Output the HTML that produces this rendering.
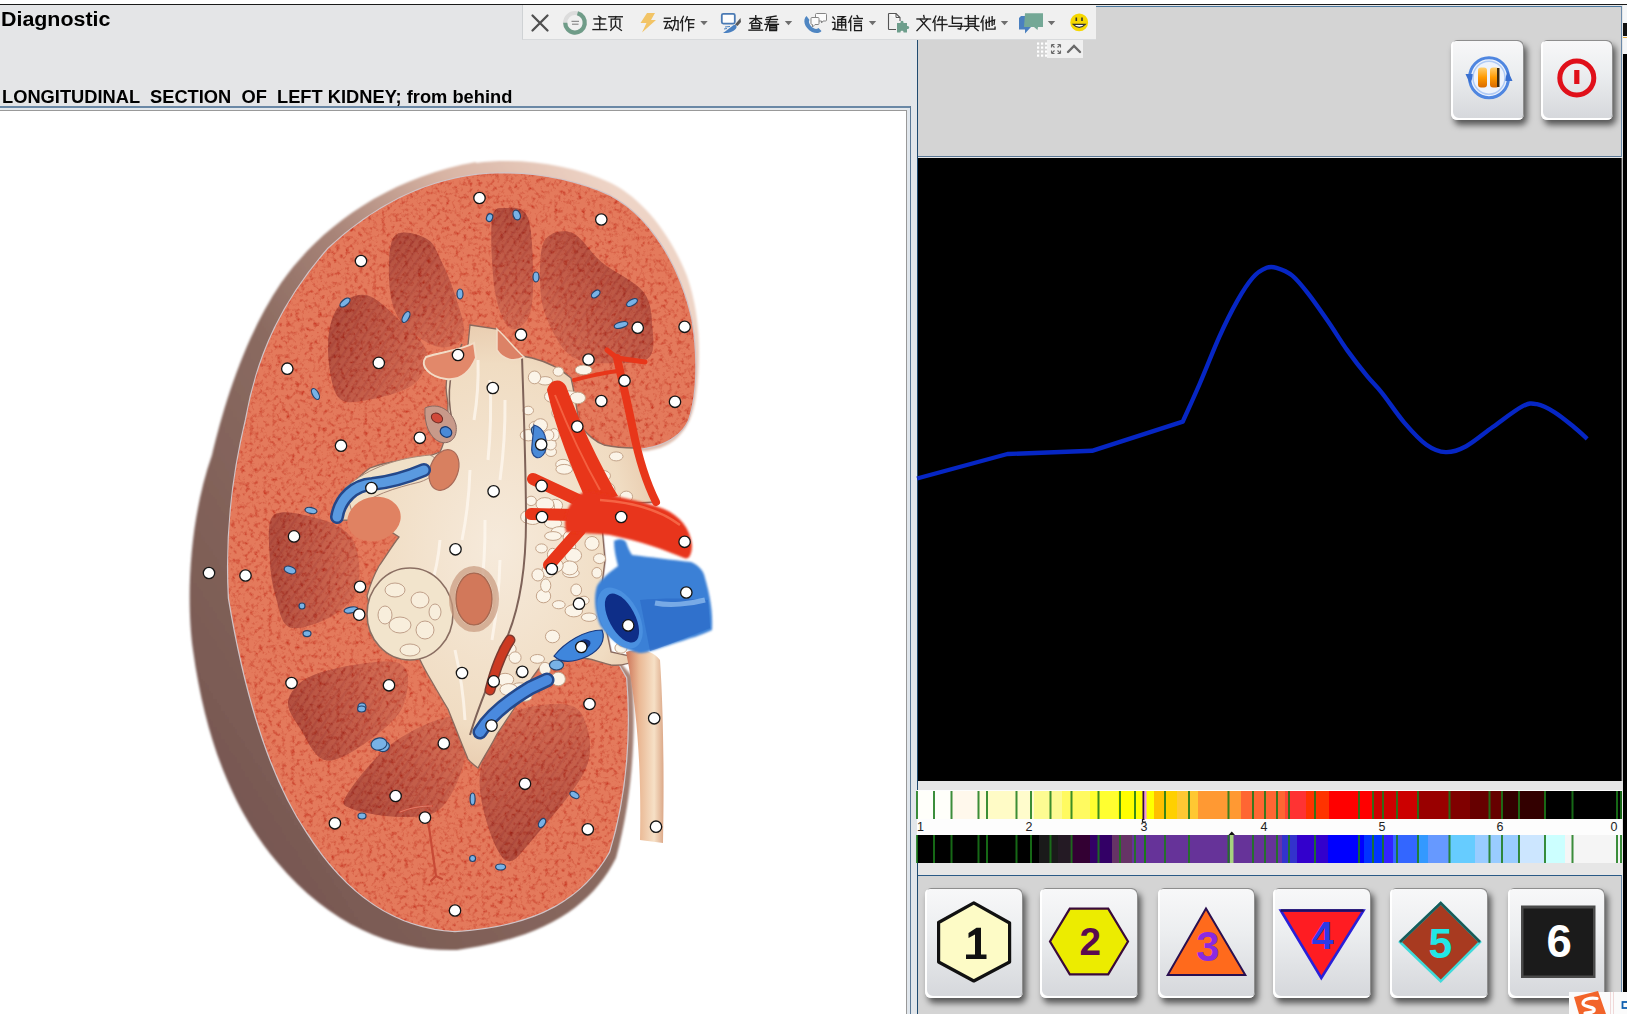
<!DOCTYPE html>
<html><head><meta charset="utf-8">
<style>
html,body{margin:0;padding:0;}
body{width:1627px;height:1014px;position:relative;overflow:hidden;background:#fff;font-family:"Liberation Sans",sans-serif;}
.a{position:absolute;}
</style></head><body>
<div class="a" style="left:0;top:4px;width:1627px;height:1px;background:#1a1a1a"></div>
<div class="a" style="left:0;top:5px;width:917px;height:101px;background:#e4e5e7"></div>
<div class="a" style="left:1px;top:9.4px;font-weight:bold;font-size:20px;line-height:20px;color:#000;transform-origin:0 0;transform:scaleX(1.07)">Diagnostic</div>
<div class="a" style="left:1.5px;top:87.8px;font-weight:bold;font-size:18px;line-height:18px;color:#000;white-space:pre;transform-origin:0 0;transform:scaleX(1.016)">LONGITUDINAL  SECTION  OF  LEFT KIDNEY; from behind</div>
<div class="a" style="left:0;top:106px;width:911px;height:2px;background:#6a88a6"></div>
<div class="a" style="left:0;top:108px;width:910px;height:2px;background:#e4e8ec"></div>
<div class="a" style="left:0;top:110px;width:907px;height:1px;background:#999"></div>
<div class="a" style="left:906px;top:110px;width:1px;height:904px;background:#999"></div>
<div class="a" style="left:907px;top:108px;width:3px;height:906px;background:#e0e6ec"></div>
<div class="a" style="left:910px;top:106px;width:1px;height:908px;background:#5a7896"></div>
<div class="a" style="left:911px;top:5px;width:6px;height:1009px;background:#e2e6ea"></div>
<div class="a" style="left:0;top:111px;width:906px;height:903px;background:#fff;overflow:hidden">
<svg class="a" style="left:0;top:-111px" width="906" height="1014" viewBox="0 0 906 1014">
<defs>
<filter id="tex" x="0" y="0" width="100%" height="100%">
 <feTurbulence type="fractalNoise" baseFrequency="0.22" numOctaves="3" seed="5" result="n"/>
 <feColorMatrix in="n" type="matrix" values="0 0 0 0 0.78  0 0 0 0 0.25  0 0 0 0 0.2  0 0 0 -2.6 1.35" result="m"/>
 <feComposite in="m" in2="SourceGraphic" operator="in" result="mm"/>
 <feBlend in="SourceGraphic" in2="mm" mode="multiply"/>
</filter>
<filter id="b1"><feGaussianBlur stdDeviation="1"/></filter>
<filter id="b2"><feGaussianBlur stdDeviation="2.2"/></filter>
<filter id="b4"><feGaussianBlur stdDeviation="5"/></filter>
<linearGradient id="cap" x1="0.1" y1="0.9" x2="0.9" y2="0.1"><stop offset="0" stop-color="#765650"/><stop offset="0.45" stop-color="#8a6a60"/><stop offset="0.62" stop-color="#a88478"/><stop offset="0.8" stop-color="#d8b4a4"/><stop offset="1" stop-color="#eed4c6"/></linearGradient>
<linearGradient id="vein" x1="0" y1="0" x2="1" y2="0.2"><stop offset="0" stop-color="#2a62c0"/><stop offset="0.5" stop-color="#3f86dc"/><stop offset="1" stop-color="#62a8ee"/></linearGradient>
<linearGradient id="ure" x1="0" y1="0" x2="1" y2="0"><stop offset="0" stop-color="#cc7458"/><stop offset="0.35" stop-color="#eab894"/><stop offset="0.75" stop-color="#f6e0c6"/><stop offset="1" stop-color="#dca888"/></linearGradient>
<radialGradient id="sin" cx="0.5" cy="0.5" r="0.55"><stop offset="0" stop-color="#f6eadb"/><stop offset="0.75" stop-color="#f0dcc2"/><stop offset="1" stop-color="#e6c6a8"/></radialGradient>
<pattern id="str" width="7" height="7" patternUnits="userSpaceOnUse" patternTransform="rotate(35)"><rect width="7" height="7" fill="#c2604a"/><rect width="2.2" height="7" fill="#a8463a"/></pattern>
</defs>
<path d="M476,163 C522,157 572,165 611,183 C646,201 672,238 687,276 C699,310 702,352 696,396 C693,420 683,440 660,448 C645,452 640,452 636,450 L645,470 L656,502 L600,505 L605,560 L600,600 L611,652 L632,676 C636,725 634,792 616,858 C592,906 545,938 457,950 C398,952 332,928 277,862 C236,814 206,745 193,650 C186,600 189,520 212,455 C224,405 244,338 281,283 C318,230 385,178 476,162 Z" fill="url(#cap)" filter="url(#b1)"/>
<path d="M476,175 C522,170 572,178 610,196 C648,216 678,262 691,318 C698,358 696,398 688,420 C680,438 660,447 636,449 L645,470 L656,502 L600,505 L605,560 L600,600 L611,652 L626,678 C630,725 628,790 609,852 C584,896 540,926 455,931 C400,928 350,900 307,832 C272,780 246,700 229,598 C226,540 231,482 246,420 C258,352 284,300 328,249 C372,208 420,182 476,175 Z" fill="none" stroke="#d0c4c8" stroke-width="2.5"/>
<g filter="url(#tex)">
<path d="M476,175 C522,170 572,178 610,196 C648,216 678,262 691,318 C698,358 696,398 688,420 C680,438 660,447 636,449 L645,470 L656,502 L600,505 L605,560 L600,600 L611,652 L626,678 C630,725 628,790 609,852 C584,896 540,926 455,931 C400,928 350,900 307,832 C272,780 246,700 229,598 C226,540 231,482 246,420 C258,352 284,300 328,249 C372,208 420,182 476,175 Z" fill="#e47a5c"/>
<linearGradient id="pg0" gradientUnits="userSpaceOnUse" x1="510" y1="210" x2="510" y2="328"><stop offset="0" stop-color="#9e3c32" stop-opacity="0.8"/><stop offset="0.6" stop-color="#b24a3e" stop-opacity="0.55"/><stop offset="1" stop-color="#c86050" stop-opacity="0.3"/></linearGradient>
<path d="M505.0,208.0 C511.0,207.7 523.3,205.5 528.0,218.0 C532.7,230.5 533.0,266.3 533.0,283.0 C533.0,299.7 531.8,310.5 528.0,318.0 C524.2,325.5 515.5,332.3 510.0,328.0 C504.5,323.7 498.0,310.0 495.0,292.0 C492.0,274.0 490.3,234.0 492.0,220.0 C493.7,206.0 499.0,208.3 505.0,208.0 Z" fill="url(#pg0)"/>
<path d="M505.0,208.0 C511.0,207.7 523.3,205.5 528.0,218.0 C532.7,230.5 533.0,266.3 533.0,283.0 C533.0,299.7 531.8,310.5 528.0,318.0 C524.2,325.5 515.5,332.3 510.0,328.0 C504.5,323.7 498.0,310.0 495.0,292.0 C492.0,274.0 490.3,234.0 492.0,220.0 C493.7,206.0 499.0,208.3 505.0,208.0 Z" fill="url(#str)" opacity="0.35"/>
<linearGradient id="pg1" gradientUnits="userSpaceOnUse" x1="635" y1="275" x2="560" y2="350"><stop offset="0" stop-color="#9e3c32" stop-opacity="0.8"/><stop offset="0.6" stop-color="#b24a3e" stop-opacity="0.55"/><stop offset="1" stop-color="#c86050" stop-opacity="0.3"/></linearGradient>
<path d="M572.5,232.9 C581.9,236.8 590.2,252.7 602.0,262.5 C613.8,272.4 635.1,281.1 643.5,292.0 C651.9,302.9 651.4,316.8 652.4,327.6 C653.4,338.4 654.8,351.1 649.4,357.0 C644.0,362.9 632.6,363.0 619.8,363.0 C607.0,363.0 584.8,364.9 572.5,357.0 C560.2,349.1 551.2,329.5 545.8,315.7 C540.4,301.9 540.0,286.8 540.0,274.0 C540.0,261.2 540.4,245.7 545.8,238.8 C551.2,232.0 563.1,229.0 572.5,232.9 Z" fill="url(#pg1)"/>
<path d="M572.5,232.9 C581.9,236.8 590.2,252.7 602.0,262.5 C613.8,272.4 635.1,281.1 643.5,292.0 C651.9,302.9 651.4,316.8 652.4,327.6 C653.4,338.4 654.8,351.1 649.4,357.0 C644.0,362.9 632.6,363.0 619.8,363.0 C607.0,363.0 584.8,364.9 572.5,357.0 C560.2,349.1 551.2,329.5 545.8,315.7 C540.4,301.9 540.0,286.8 540.0,274.0 C540.0,261.2 540.4,245.7 545.8,238.8 C551.2,232.0 563.1,229.0 572.5,232.9 Z" fill="url(#str)" opacity="0.35"/>
<linearGradient id="pg2" gradientUnits="userSpaceOnUse" x1="405" y1="240" x2="455" y2="340"><stop offset="0" stop-color="#9e3c32" stop-opacity="0.8"/><stop offset="0.6" stop-color="#b24a3e" stop-opacity="0.55"/><stop offset="1" stop-color="#c86050" stop-opacity="0.3"/></linearGradient>
<path d="M426.5,238.7 C434.3,242.8 436.4,251.1 441.3,261.0 C446.2,270.9 452.3,285.7 456.0,298.0 C459.7,310.3 466.4,326.8 463.5,335.0 C460.6,343.2 449.1,349.1 438.8,347.0 C428.5,344.9 410.0,332.7 401.8,322.5 C393.6,312.3 390.7,300.0 389.5,285.6 C388.3,271.2 388.2,244.1 394.4,236.3 C400.6,228.5 418.7,234.6 426.5,238.7 Z" fill="url(#pg2)"/>
<path d="M426.5,238.7 C434.3,242.8 436.4,251.1 441.3,261.0 C446.2,270.9 452.3,285.7 456.0,298.0 C459.7,310.3 466.4,326.8 463.5,335.0 C460.6,343.2 449.1,349.1 438.8,347.0 C428.5,344.9 410.0,332.7 401.8,322.5 C393.6,312.3 390.7,300.0 389.5,285.6 C388.3,271.2 388.2,244.1 394.4,236.3 C400.6,228.5 418.7,234.6 426.5,238.7 Z" fill="url(#str)" opacity="0.35"/>
<linearGradient id="pg3" gradientUnits="userSpaceOnUse" x1="335" y1="335" x2="420" y2="372"><stop offset="0" stop-color="#9e3c32" stop-opacity="0.8"/><stop offset="0.6" stop-color="#b24a3e" stop-opacity="0.55"/><stop offset="1" stop-color="#c86050" stop-opacity="0.3"/></linearGradient>
<path d="M367.3,295.4 C378.0,297.8 391.9,313.1 401.8,322.5 C411.7,331.9 424.5,341.8 426.5,352.0 C428.5,362.2 423.9,376.0 414.0,384.0 C404.1,392.0 380.0,397.9 367.3,400.0 C354.6,402.1 344.4,405.3 337.8,396.5 C331.2,387.7 328.0,361.8 328.0,347.0 C328.0,332.2 331.2,316.4 337.8,307.8 C344.4,299.2 356.6,292.9 367.3,295.4 Z" fill="url(#pg3)"/>
<path d="M367.3,295.4 C378.0,297.8 391.9,313.1 401.8,322.5 C411.7,331.9 424.5,341.8 426.5,352.0 C428.5,362.2 423.9,376.0 414.0,384.0 C404.1,392.0 380.0,397.9 367.3,400.0 C354.6,402.1 344.4,405.3 337.8,396.5 C331.2,387.7 328.0,361.8 328.0,347.0 C328.0,332.2 331.2,316.4 337.8,307.8 C344.4,299.2 356.6,292.9 367.3,295.4 Z" fill="url(#str)" opacity="0.35"/>
<linearGradient id="pg4" gradientUnits="userSpaceOnUse" x1="276" y1="565" x2="355" y2="570"><stop offset="0" stop-color="#9e3c32" stop-opacity="0.8"/><stop offset="0.6" stop-color="#b24a3e" stop-opacity="0.55"/><stop offset="1" stop-color="#c86050" stop-opacity="0.3"/></linearGradient>
<path d="M319.4,519.0 C331.9,522.3 342.4,527.5 349.0,534.7 C355.6,541.9 357.9,552.4 358.9,562.3 C359.9,572.1 359.9,584.6 355.0,593.8 C350.1,603.0 340.2,611.9 329.3,617.5 C318.4,623.1 298.8,630.7 289.9,627.4 C281.0,624.1 279.3,609.0 276.0,597.8 C272.7,586.6 270.3,573.8 270.0,560.0 C269.7,546.2 265.8,521.8 274.0,515.0 C282.2,508.2 306.9,515.7 319.4,519.0 Z" fill="url(#pg4)"/>
<path d="M319.4,519.0 C331.9,522.3 342.4,527.5 349.0,534.7 C355.6,541.9 357.9,552.4 358.9,562.3 C359.9,572.1 359.9,584.6 355.0,593.8 C350.1,603.0 340.2,611.9 329.3,617.5 C318.4,623.1 298.8,630.7 289.9,627.4 C281.0,624.1 279.3,609.0 276.0,597.8 C272.7,586.6 270.3,573.8 270.0,560.0 C269.7,546.2 265.8,521.8 274.0,515.0 C282.2,508.2 306.9,515.7 319.4,519.0 Z" fill="url(#str)" opacity="0.35"/>
<linearGradient id="pg5" gradientUnits="userSpaceOnUse" x1="298" y1="720" x2="395" y2="690"><stop offset="0" stop-color="#9e3c32" stop-opacity="0.8"/><stop offset="0.6" stop-color="#b24a3e" stop-opacity="0.55"/><stop offset="1" stop-color="#c86050" stop-opacity="0.3"/></linearGradient>
<path d="M319.0,673.0 C337.4,667.0 384.6,657.8 398.7,663.0 C412.8,668.2 408.1,691.6 403.8,704.0 C399.5,716.4 385.8,728.0 373.0,737.4 C360.2,746.8 339.0,761.8 327.0,760.5 C315.0,759.2 307.4,740.0 301.0,729.7 C294.6,719.5 285.5,708.5 288.5,699.0 C291.5,689.5 300.6,679.0 319.0,673.0 Z" fill="url(#pg5)"/>
<path d="M319.0,673.0 C337.4,667.0 384.6,657.8 398.7,663.0 C412.8,668.2 408.1,691.6 403.8,704.0 C399.5,716.4 385.8,728.0 373.0,737.4 C360.2,746.8 339.0,761.8 327.0,760.5 C315.0,759.2 307.4,740.0 301.0,729.7 C294.6,719.5 285.5,708.5 288.5,699.0 C291.5,689.5 300.6,679.0 319.0,673.0 Z" fill="url(#str)" opacity="0.35"/>
<linearGradient id="pg6" gradientUnits="userSpaceOnUse" x1="365" y1="805" x2="455" y2="742"><stop offset="0" stop-color="#9e3c32" stop-opacity="0.8"/><stop offset="0.6" stop-color="#b24a3e" stop-opacity="0.55"/><stop offset="1" stop-color="#c86050" stop-opacity="0.3"/></linearGradient>
<path d="M393.6,742.6 C411.5,729.8 443.0,714.9 455.0,717.0 C467.0,719.1 467.5,740.0 465.4,755.0 C463.3,770.0 452.6,796.4 442.3,806.7 C432.0,817.0 418.8,816.6 403.8,817.0 C388.9,817.4 362.0,812.8 352.6,809.0 C343.2,805.2 340.6,805.1 347.4,794.0 C354.2,782.9 375.7,755.4 393.6,742.6 Z" fill="url(#pg6)"/>
<path d="M393.6,742.6 C411.5,729.8 443.0,714.9 455.0,717.0 C467.0,719.1 467.5,740.0 465.4,755.0 C463.3,770.0 452.6,796.4 442.3,806.7 C432.0,817.0 418.8,816.6 403.8,817.0 C388.9,817.4 362.0,812.8 352.6,809.0 C343.2,805.2 340.6,805.1 347.4,794.0 C354.2,782.9 375.7,755.4 393.6,742.6 Z" fill="url(#str)" opacity="0.35"/>
<linearGradient id="pg7" gradientUnits="userSpaceOnUse" x1="545" y1="845" x2="522" y2="712"><stop offset="0" stop-color="#9e3c32" stop-opacity="0.8"/><stop offset="0.6" stop-color="#b24a3e" stop-opacity="0.55"/><stop offset="1" stop-color="#c86050" stop-opacity="0.3"/></linearGradient>
<path d="M506.4,717.0 C519.2,706.3 544.9,704.0 557.7,704.0 C570.5,704.0 578.6,706.3 583.3,717.0 C588.0,727.7 594.5,747.5 586.0,768.0 C577.5,788.5 545.3,824.6 532.0,840.0 C518.7,855.4 514.1,863.9 506.4,860.5 C498.7,857.1 490.3,834.9 486.0,819.5 C481.7,804.1 477.4,785.1 480.8,768.0 C484.2,750.9 493.6,727.7 506.4,717.0 Z" fill="url(#pg7)"/>
<path d="M506.4,717.0 C519.2,706.3 544.9,704.0 557.7,704.0 C570.5,704.0 578.6,706.3 583.3,717.0 C588.0,727.7 594.5,747.5 586.0,768.0 C577.5,788.5 545.3,824.6 532.0,840.0 C518.7,855.4 514.1,863.9 506.4,860.5 C498.7,857.1 490.3,834.9 486.0,819.5 C481.7,804.1 477.4,785.1 480.8,768.0 C484.2,750.9 493.6,727.7 506.4,717.0 Z" fill="url(#str)" opacity="0.35"/>
</g>
<path d="M470,325 L497,329 C503,340 512,352 522,356 L532,358 C548,362 562,370 571,378 C575,395 577,410 579,424 C588,436 596,442 604,445 C618,448 628,448 635,448 L645,470 L656,502 L600,505 L605,560 L600,600 L611,652 L639,658 C630,664 620,666 611,665 C598,662 588,657 575,657 C560,660 550,664 540,667 C530,680 522,692 517,704 C510,715 503,725 497,734 C490,748 483,758 478,768 C474,765 470,762 468,759 C460,740 454,724 448,709 C440,696 434,685 428,675 C424,668 420,660 418,655 C395,650 375,630 367,596 C370,585 374,575 379,566 C386,556 392,546 399,537 C385,527 365,520 340,520 L335,510 C345,490 360,475 370,468 C385,462 400,460 418,460 L440,452 C446,440 448,420 448,403 C446,392 445,384 448,374 C456,365 464,355 468,345 Z" fill="url(#sin)"/>
<path d="M470,325 L497,329 C503,340 512,352 522,356 L532,358 C548,362 562,370 571,378 C575,395 577,410 579,424 C588,436 596,442 604,445 C618,448 628,448 635,448 L645,470 L656,502 L600,505 L605,560 L600,600 L611,652 L639,658 C630,664 620,666 611,665 C598,662 588,657 575,657 C560,660 550,664 540,667 C530,680 522,692 517,704 C510,715 503,725 497,734 C490,748 483,758 478,768 C474,765 470,762 468,759 C460,740 454,724 448,709 C440,696 434,685 428,675 C424,668 420,660 418,655 C395,650 375,630 367,596 C370,585 374,575 379,566 C386,556 392,546 399,537 C385,527 365,520 340,520 L335,510 C345,490 360,475 370,468 C385,462 400,460 418,460 L440,452 C446,440 448,420 448,403 C446,392 445,384 448,374 C456,365 464,355 468,345 Z" fill="none" stroke="#8a6a5e" stroke-width="1.3"/>
<path d="M478,360 Q479.0,390.0 474,420" stroke="#fffaf2" stroke-width="3" opacity="0.7" fill="none"/>
<path d="M490,380 Q492.0,420.0 488,460" stroke="#fffaf2" stroke-width="3" opacity="0.7" fill="none"/>
<path d="M505,400 Q505.5,440.0 500,480" stroke="#fffaf2" stroke-width="3" opacity="0.7" fill="none"/>
<path d="M470,470 Q469.0,505.0 462,540" stroke="#fffaf2" stroke-width="3" opacity="0.7" fill="none"/>
<path d="M485,520 Q485.5,560.0 480,600" stroke="#fffaf2" stroke-width="3" opacity="0.7" fill="none"/>
<path d="M500,560 Q499.0,600.0 492,640" stroke="#fffaf2" stroke-width="3" opacity="0.7" fill="none"/>
<path d="M455,650 Q463.0,685.0 465,720" stroke="#fffaf2" stroke-width="3" opacity="0.7" fill="none"/>
<path d="M440,540 Q438.0,565.0 430,590" stroke="#fffaf2" stroke-width="3" opacity="0.7" fill="none"/>
<ellipse cx="545.1" cy="380.8" rx="7.6" ry="4.2" fill="#fbf4e8" stroke="#c4a48a" stroke-width="1"/><ellipse cx="557.6" cy="403.4" rx="5.2" ry="5.5" fill="#fbf4e8" stroke="#c4a48a" stroke-width="1"/><ellipse cx="528.2" cy="410.5" rx="5.3" ry="4.3" fill="#fbf4e8" stroke="#c4a48a" stroke-width="1"/><ellipse cx="551.0" cy="451.8" rx="5.5" ry="4.7" fill="#fbf4e8" stroke="#c4a48a" stroke-width="1"/><ellipse cx="563.0" cy="464.5" rx="7.3" ry="5.2" fill="#fbf4e8" stroke="#c4a48a" stroke-width="1"/><ellipse cx="583.6" cy="369.9" rx="8.4" ry="4.9" fill="#fbf4e8" stroke="#c4a48a" stroke-width="1"/><ellipse cx="534.5" cy="377.4" rx="6.2" ry="6.4" fill="#fbf4e8" stroke="#c4a48a" stroke-width="1"/><ellipse cx="536.7" cy="426.1" rx="7.6" ry="5.1" fill="#fbf4e8" stroke="#c4a48a" stroke-width="1"/><ellipse cx="558.3" cy="371.6" rx="5.2" ry="4.6" fill="#fbf4e8" stroke="#c4a48a" stroke-width="1"/><ellipse cx="566.1" cy="409.9" rx="6.3" ry="5.8" fill="#fbf4e8" stroke="#c4a48a" stroke-width="1"/><ellipse cx="552.7" cy="396.5" rx="8.2" ry="6.1" fill="#fbf4e8" stroke="#c4a48a" stroke-width="1"/><ellipse cx="540.4" cy="425.3" rx="7.1" ry="6.6" fill="#fbf4e8" stroke="#c4a48a" stroke-width="1"/><ellipse cx="569.0" cy="395.2" rx="8.9" ry="4.4" fill="#fbf4e8" stroke="#c4a48a" stroke-width="1"/><ellipse cx="550.7" cy="444.5" rx="5.6" ry="5.5" fill="#fbf4e8" stroke="#c4a48a" stroke-width="1"/><ellipse cx="528.3" cy="435.2" rx="8.1" ry="5.7" fill="#fbf4e8" stroke="#c4a48a" stroke-width="1"/><ellipse cx="577.7" cy="397.9" rx="7.8" ry="5.8" fill="#fbf4e8" stroke="#c4a48a" stroke-width="1"/><ellipse cx="560.2" cy="412.9" rx="8.4" ry="6.8" fill="#fbf4e8" stroke="#c4a48a" stroke-width="1"/><ellipse cx="554.0" cy="434.7" rx="5.2" ry="6.1" fill="#fbf4e8" stroke="#c4a48a" stroke-width="1"/><ellipse cx="564.2" cy="469.3" rx="8.3" ry="4.9" fill="#fbf4e8" stroke="#c4a48a" stroke-width="1"/><ellipse cx="548.8" cy="435.2" rx="5.1" ry="5.4" fill="#fbf4e8" stroke="#c4a48a" stroke-width="1"/><ellipse cx="552.6" cy="554.6" rx="5.2" ry="6.3" fill="#fbf4e8" stroke="#c4a48a" stroke-width="1"/><ellipse cx="548.6" cy="571.0" rx="6.6" ry="6.6" fill="#fbf4e8" stroke="#c4a48a" stroke-width="1"/><ellipse cx="543.5" cy="596.1" rx="7.2" ry="6.7" fill="#fbf4e8" stroke="#c4a48a" stroke-width="1"/><ellipse cx="621.0" cy="648.0" rx="6.1" ry="5.2" fill="#fbf4e8" stroke="#c4a48a" stroke-width="1"/><ellipse cx="572.7" cy="650.5" rx="8.8" ry="4.5" fill="#fbf4e8" stroke="#c4a48a" stroke-width="1"/><ellipse cx="553.5" cy="569.0" rx="5.9" ry="5.5" fill="#fbf4e8" stroke="#c4a48a" stroke-width="1"/><ellipse cx="596.9" cy="572.8" rx="5.0" ry="5.3" fill="#fbf4e8" stroke="#c4a48a" stroke-width="1"/><ellipse cx="573.8" cy="610.8" rx="8.8" ry="6.1" fill="#fbf4e8" stroke="#c4a48a" stroke-width="1"/><ellipse cx="589.1" cy="617.2" rx="7.7" ry="4.2" fill="#fbf4e8" stroke="#c4a48a" stroke-width="1"/><ellipse cx="629.5" cy="637.5" rx="8.5" ry="6.4" fill="#fbf4e8" stroke="#c4a48a" stroke-width="1"/><ellipse cx="576.2" cy="589.9" rx="5.4" ry="5.9" fill="#fbf4e8" stroke="#c4a48a" stroke-width="1"/><ellipse cx="541.5" cy="548.4" rx="5.8" ry="4.5" fill="#fbf4e8" stroke="#c4a48a" stroke-width="1"/><ellipse cx="570.7" cy="546.6" rx="5.0" ry="4.5" fill="#fbf4e8" stroke="#c4a48a" stroke-width="1"/><ellipse cx="545.7" cy="585.5" rx="5.1" ry="6.6" fill="#fbf4e8" stroke="#c4a48a" stroke-width="1"/><ellipse cx="599.5" cy="558.6" rx="6.0" ry="5.0" fill="#fbf4e8" stroke="#c4a48a" stroke-width="1"/><ellipse cx="573.2" cy="555.4" rx="8.4" ry="7.0" fill="#fbf4e8" stroke="#c4a48a" stroke-width="1"/><ellipse cx="583.9" cy="600.5" rx="5.3" ry="4.3" fill="#fbf4e8" stroke="#c4a48a" stroke-width="1"/><ellipse cx="571.0" cy="573.1" rx="8.3" ry="4.5" fill="#fbf4e8" stroke="#c4a48a" stroke-width="1"/><ellipse cx="537.4" cy="658.9" rx="7.1" ry="4.4" fill="#fbf4e8" stroke="#c4a48a" stroke-width="1"/><ellipse cx="592.0" cy="543.4" rx="7.1" ry="6.9" fill="#fbf4e8" stroke="#c4a48a" stroke-width="1"/><ellipse cx="625.6" cy="627.0" rx="6.0" ry="5.1" fill="#fbf4e8" stroke="#c4a48a" stroke-width="1"/><ellipse cx="552.5" cy="636.5" rx="7.1" ry="6.3" fill="#fbf4e8" stroke="#c4a48a" stroke-width="1"/><ellipse cx="569.6" cy="567.9" rx="8.2" ry="7.0" fill="#fbf4e8" stroke="#c4a48a" stroke-width="1"/><ellipse cx="624.5" cy="640.8" rx="8.3" ry="6.2" fill="#fbf4e8" stroke="#c4a48a" stroke-width="1"/><ellipse cx="558.8" cy="604.7" rx="6.4" ry="4.1" fill="#fbf4e8" stroke="#c4a48a" stroke-width="1"/><ellipse cx="537.9" cy="574.9" rx="6.0" ry="6.1" fill="#fbf4e8" stroke="#c4a48a" stroke-width="1"/><ellipse cx="635.4" cy="595.9" rx="8.7" ry="7.0" fill="#fbf4e8" stroke="#c4a48a" stroke-width="1"/><ellipse cx="635.3" cy="585.6" rx="5.9" ry="4.7" fill="#fbf4e8" stroke="#c4a48a" stroke-width="1"/><ellipse cx="555.7" cy="565.5" rx="7.5" ry="6.7" fill="#fbf4e8" stroke="#c4a48a" stroke-width="1"/><ellipse cx="623.2" cy="599.9" rx="7.6" ry="6.4" fill="#fbf4e8" stroke="#c4a48a" stroke-width="1"/><ellipse cx="505.1" cy="679.6" rx="8.6" ry="6.3" fill="#fbf4e8" stroke="#c4a48a" stroke-width="1"/><ellipse cx="545.0" cy="668.7" rx="5.7" ry="6.4" fill="#fbf4e8" stroke="#c4a48a" stroke-width="1"/><ellipse cx="520.0" cy="688.0" rx="8.9" ry="5.2" fill="#fbf4e8" stroke="#c4a48a" stroke-width="1"/><ellipse cx="524.1" cy="696.8" rx="7.9" ry="4.5" fill="#fbf4e8" stroke="#c4a48a" stroke-width="1"/><ellipse cx="507.6" cy="649.1" rx="8.6" ry="6.4" fill="#fbf4e8" stroke="#c4a48a" stroke-width="1"/><ellipse cx="508.8" cy="689.6" rx="8.9" ry="6.0" fill="#fbf4e8" stroke="#c4a48a" stroke-width="1"/><ellipse cx="521.0" cy="672.9" rx="5.5" ry="4.0" fill="#fbf4e8" stroke="#c4a48a" stroke-width="1"/><ellipse cx="558.3" cy="679.0" rx="7.1" ry="6.8" fill="#fbf4e8" stroke="#c4a48a" stroke-width="1"/><ellipse cx="526.0" cy="692.3" rx="8.3" ry="4.6" fill="#fbf4e8" stroke="#c4a48a" stroke-width="1"/><ellipse cx="515.1" cy="657.6" rx="6.0" ry="5.8" fill="#fbf4e8" stroke="#c4a48a" stroke-width="1"/><ellipse cx="603.0" cy="486.4" rx="5.5" ry="6.7" fill="#fbf4e8" stroke="#c4a48a" stroke-width="1"/><ellipse cx="607.7" cy="489.4" rx="7.3" ry="6.7" fill="#fbf4e8" stroke="#c4a48a" stroke-width="1"/><ellipse cx="611.0" cy="523.8" rx="7.0" ry="5.6" fill="#fbf4e8" stroke="#c4a48a" stroke-width="1"/><ellipse cx="616.2" cy="456.4" rx="6.8" ry="4.5" fill="#fbf4e8" stroke="#c4a48a" stroke-width="1"/><ellipse cx="590.2" cy="514.9" rx="5.7" ry="5.4" fill="#fbf4e8" stroke="#c4a48a" stroke-width="1"/><ellipse cx="626.3" cy="496.7" rx="6.3" ry="5.6" fill="#fbf4e8" stroke="#c4a48a" stroke-width="1"/><ellipse cx="617.8" cy="513.8" rx="5.4" ry="5.7" fill="#fbf4e8" stroke="#c4a48a" stroke-width="1"/><ellipse cx="602.4" cy="475.8" rx="8.1" ry="5.5" fill="#fbf4e8" stroke="#c4a48a" stroke-width="1"/><ellipse cx="553.1" cy="523.2" rx="8.6" ry="5.3" fill="#fbf4e8" stroke="#c4a48a" stroke-width="1"/><ellipse cx="555.6" cy="505.4" rx="7.0" ry="6.1" fill="#fbf4e8" stroke="#c4a48a" stroke-width="1"/><ellipse cx="547.6" cy="507.3" rx="6.9" ry="6.8" fill="#fbf4e8" stroke="#c4a48a" stroke-width="1"/><ellipse cx="560.0" cy="531.4" rx="8.8" ry="4.8" fill="#fbf4e8" stroke="#c4a48a" stroke-width="1"/><ellipse cx="553.0" cy="536.0" rx="8.4" ry="4.4" fill="#fbf4e8" stroke="#c4a48a" stroke-width="1"/><ellipse cx="531.1" cy="500.9" rx="5.3" ry="4.7" fill="#fbf4e8" stroke="#c4a48a" stroke-width="1"/><ellipse cx="528.7" cy="516.9" rx="8.1" ry="6.7" fill="#fbf4e8" stroke="#c4a48a" stroke-width="1"/><ellipse cx="532.7" cy="520.1" rx="7.6" ry="4.4" fill="#fbf4e8" stroke="#c4a48a" stroke-width="1"/><ellipse cx="569.1" cy="537.7" rx="5.9" ry="6.9" fill="#fbf4e8" stroke="#c4a48a" stroke-width="1"/><ellipse cx="544.9" cy="504.1" rx="9.0" ry="6.5" fill="#fbf4e8" stroke="#c4a48a" stroke-width="1"/>
<path d="M522,356 C524,420 526,470 526,520 C526,560 522,600 508,635 C495,670 480,700 470,735" fill="none" stroke="#7e6258" stroke-width="2"/>
<path d="M462,344 C450,370 446,392 452,420" fill="none" stroke="#7e6258" stroke-width="1.5"/>
<ellipse cx="410" cy="614" rx="43" ry="46" fill="#f2e4cc" stroke="#8a6e62" stroke-width="1.6"/>
<ellipse cx="395" cy="590" rx="10" ry="7" fill="#f8eedc" stroke="#c0a08a" stroke-width="1"/>
<ellipse cx="420" cy="600" rx="9" ry="8" fill="#f8eedc" stroke="#c0a08a" stroke-width="1"/>
<ellipse cx="400" cy="625" rx="11" ry="8" fill="#f8eedc" stroke="#c0a08a" stroke-width="1"/>
<ellipse cx="425" cy="630" rx="9" ry="9" fill="#f8eedc" stroke="#c0a08a" stroke-width="1"/>
<ellipse cx="410" cy="650" rx="10" ry="6" fill="#f8eedc" stroke="#c0a08a" stroke-width="1"/>
<ellipse cx="385" cy="615" rx="7" ry="9" fill="#f8eedc" stroke="#c0a08a" stroke-width="1"/>
<ellipse cx="435" cy="612" rx="6" ry="8" fill="#f8eedc" stroke="#c0a08a" stroke-width="1"/>
<path d="M345,488 C370,466 400,458 430,455 C445,462 440,475 420,482 C395,488 370,495 352,512 Z" fill="#f0e0c8" stroke="#a88878" stroke-width="1"/>
<ellipse cx="474" cy="599" rx="22" ry="30" fill="none" stroke="#c8987e" stroke-width="6" opacity="0.7"/>
<ellipse cx="474" cy="599" rx="18" ry="26" fill="#d2785a" stroke="#a86850" stroke-width="1.5"/>
<ellipse cx="374" cy="519" rx="27" ry="22" transform="rotate(-15 374 519)" fill="#e08262"/>
<ellipse cx="444" cy="470" rx="14" ry="21" transform="rotate(20 444 470)" fill="#d88060" stroke="#a86a58" stroke-width="1.2"/>
<path d="M474,343 C462,350 440,352 426,357 C419,366 430,377 446,379 C460,381 470,372 476,358 Z" fill="#e2886a" stroke="#f2dcc6" stroke-width="2"/>
<path d="M497,329 C506,337 514,348 524,357 C514,362 503,360 497,350 Z" fill="#dc8266" stroke="#f2dcc6" stroke-width="1.5"/>
<path d="M425,408 C438,402 452,410 456,425 C458,438 450,445 440,442 C430,438 424,425 425,408 Z" fill="#c89a8a" stroke="#8a6a62" stroke-width="1"/>
<ellipse cx="437" cy="418" rx="6" ry="4.5" transform="rotate(30 437 418)" fill="#d04a3a" stroke="#6a2a22" stroke-width="1"/>
<ellipse cx="446" cy="432" rx="6" ry="5" transform="rotate(30 446 432)" fill="#4a8ad8" stroke="#1a3a70" stroke-width="1.2"/>
<ellipse cx="489.6" cy="217.6" rx="3" ry="4" transform="rotate(20 489.6 217.6)" fill="#78b2e6" stroke="#24446e" stroke-width="1.2"/>
<ellipse cx="516.7" cy="215" rx="3.5" ry="5" transform="rotate(-20 516.7 215)" fill="#78b2e6" stroke="#24446e" stroke-width="1.2"/>
<ellipse cx="345" cy="302.5" rx="6" ry="3" transform="rotate(-40 345 302.5)" fill="#78b2e6" stroke="#24446e" stroke-width="1.2"/>
<ellipse cx="406" cy="317" rx="3" ry="6" transform="rotate(30 406 317)" fill="#78b2e6" stroke="#24446e" stroke-width="1.2"/>
<ellipse cx="460" cy="294" rx="3" ry="5" transform="rotate(0 460 294)" fill="#78b2e6" stroke="#24446e" stroke-width="1.2"/>
<ellipse cx="536" cy="277" rx="3" ry="5" transform="rotate(0 536 277)" fill="#78b2e6" stroke="#24446e" stroke-width="1.2"/>
<ellipse cx="595.7" cy="294" rx="5" ry="3" transform="rotate(-40 595.7 294)" fill="#78b2e6" stroke="#24446e" stroke-width="1.2"/>
<ellipse cx="632" cy="302.5" rx="6" ry="3" transform="rotate(-30 632 302.5)" fill="#78b2e6" stroke="#24446e" stroke-width="1.2"/>
<ellipse cx="621" cy="325" rx="7" ry="3" transform="rotate(-15 621 325)" fill="#78b2e6" stroke="#24446e" stroke-width="1.2"/>
<ellipse cx="315.5" cy="394" rx="6" ry="3" transform="rotate(60 315.5 394)" fill="#78b2e6" stroke="#24446e" stroke-width="1.2"/>
<ellipse cx="311" cy="510.5" rx="6" ry="3" transform="rotate(10 311 510.5)" fill="#78b2e6" stroke="#24446e" stroke-width="1.2"/>
<ellipse cx="290" cy="570" rx="6" ry="3.5" transform="rotate(20 290 570)" fill="#78b2e6" stroke="#24446e" stroke-width="1.2"/>
<ellipse cx="351" cy="610" rx="7" ry="3" transform="rotate(-10 351 610)" fill="#78b2e6" stroke="#24446e" stroke-width="1.2"/>
<ellipse cx="307" cy="633.6" rx="4" ry="3" transform="rotate(0 307 633.6)" fill="#78b2e6" stroke="#24446e" stroke-width="1.2"/>
<ellipse cx="362" cy="707" rx="4" ry="4" transform="rotate(0 362 707)" fill="#78b2e6" stroke="#24446e" stroke-width="1.2"/>
<ellipse cx="383.5" cy="746.5" rx="6" ry="5" transform="rotate(-20 383.5 746.5)" fill="#78b2e6" stroke="#24446e" stroke-width="1.2"/>
<ellipse cx="362" cy="816" rx="4" ry="3" transform="rotate(0 362 816)" fill="#78b2e6" stroke="#24446e" stroke-width="1.2"/>
<ellipse cx="472.6" cy="799" rx="2.5" ry="6" transform="rotate(0 472.6 799)" fill="#78b2e6" stroke="#24446e" stroke-width="1.2"/>
<ellipse cx="574.5" cy="795" rx="5" ry="3" transform="rotate(30 574.5 795)" fill="#78b2e6" stroke="#24446e" stroke-width="1.2"/>
<ellipse cx="542" cy="823" rx="3" ry="5" transform="rotate(30 542 823)" fill="#78b2e6" stroke="#24446e" stroke-width="1.2"/>
<ellipse cx="500.6" cy="867" rx="5" ry="3" transform="rotate(0 500.6 867)" fill="#78b2e6" stroke="#24446e" stroke-width="1.2"/>
<ellipse cx="472.6" cy="858.5" rx="3" ry="3" transform="rotate(0 472.6 858.5)" fill="#78b2e6" stroke="#24446e" stroke-width="1.2"/>
<ellipse cx="556.5" cy="665" rx="7" ry="5" transform="rotate(0 556.5 665)" fill="#78b2e6" stroke="#24446e" stroke-width="1.2"/>
<ellipse cx="379" cy="744" rx="8" ry="6" transform="rotate(-10 379 744)" fill="#78b2e6" stroke="#24446e" stroke-width="1.2"/>
<ellipse cx="361.6" cy="709" rx="4" ry="3" transform="rotate(0 361.6 709)" fill="#78b2e6" stroke="#24446e" stroke-width="1.2"/>
<ellipse cx="536" cy="432" rx="6" ry="4" transform="rotate(60 536 432)" fill="#78b2e6" stroke="#24446e" stroke-width="1.2"/>
<ellipse cx="302" cy="606" rx="3" ry="3" transform="rotate(0 302 606)" fill="#78b2e6" stroke="#24446e" stroke-width="1.2"/>
<path d="M337,517 C340,498 355,485 372,484 C392,482 410,476 424,470" fill="none" stroke="#24488a" stroke-width="14" stroke-linecap="round"/>
<path d="M337,517 C340,498 355,485 372,484 C392,482 410,476 424,470" fill="none" stroke="#5a9ae0" stroke-width="9" stroke-linecap="round"/>
<path d="M480,732 C490,715 510,700 530,688 L547,680" fill="none" stroke="#24488a" stroke-width="15" stroke-linecap="round"/>
<path d="M480,732 C490,715 510,700 530,688 L547,680" fill="none" stroke="#4a8ade" stroke-width="10" stroke-linecap="round"/>
<path d="M534,425 C545,428 548,440 545,452 C540,462 530,458 532,445 Z" fill="#4a8ad8" stroke="#24488a" stroke-width="1.2"/>
<path d="M626,652 C640,648 652,650 660,660 C664,720 664,790 663,843 L640,840 C641,790 640,720 626,652 Z" fill="url(#ure)"/>
<path d="M614,541 C619,538 624,539 626,542 C628,548 630,552 632,555 C650,557 672,560 691,562 C700,566 704,572 705,578 C710,595 713,612 712,630 C700,636 690,638 682,641 C668,645 658,649 650,651 C645,653 642,653 639,653 C625,650 610,640 600,625 C594,610 594,595 597,586 C602,578 610,572 618,566 C616,558 614,550 614,541 Z" fill="#3a80d6" filter="url(#b1)"/>
<path d="M640,600 C660,598 690,598 708,600 L710,628 C690,636 665,646 650,651 Z" fill="#2a68c4" opacity="0.6"/>
<ellipse cx="620" cy="618" rx="19" ry="33" transform="rotate(-28 620 618)" fill="#4a90e0"/>
<ellipse cx="622" cy="618" rx="13" ry="27" transform="rotate(-28 622 618)" fill="#0e2e88"/>
<path d="M655,603 C670,606 690,604 705,600" fill="none" stroke="#a8d0f6" stroke-width="5" opacity="0.6"/>
<path d="M554,656 C565,642 585,630 602,630 C606,640 600,650 588,656 C575,662 562,664 554,656 Z" fill="#3f86dc" stroke="#1a3a80" stroke-width="1.2"/>
<ellipse cx="583" cy="645" rx="8" ry="5" transform="rotate(-25 583 645)" fill="#10307e"/>
<g fill="none" stroke="#e8361a" stroke-linecap="round" stroke-linejoin="round">
<path d="M617,358 C622,380 628,405 633,430 C638,455 645,480 656,502" stroke-width="8"/>
<path d="M617,358 L607,350 M617,358 L645,362" stroke-width="5"/>
<path d="M574,380 C590,376 605,372 620,371" stroke-width="4"/>
<path d="M578,500 L533,479 M575,515 L531,514 M580,530 L549,565" stroke-width="12"/>
</g>
<path d="M547,390 C550,378 562,378 566,386 C575,410 592,450 618,496 L588,504 C572,470 556,430 547,390 Z" fill="#e8361a"/>
<path d="M586,491 C610,495 640,500 664,509 C680,516 690,528 692,545 C692,556 688,560 684,558 C665,550 640,541 610,535 C590,533 575,533 566,532 C562,515 570,498 586,491 Z" fill="#e8361a" filter="url(#b1)"/>
<path d="M600,500 C630,502 660,510 680,525" fill="none" stroke="#ff8a66" stroke-width="2.5" opacity="0.55"/>
<path d="M555,395 C565,420 580,455 600,490" fill="none" stroke="#ff8a66" stroke-width="2" opacity="0.5"/>
<path d="M490,690 C495,670 502,652 510,640" fill="none" stroke="#7a3a30" stroke-width="11" stroke-linecap="round"/>
<path d="M490,690 C495,670 502,652 510,640" fill="none" stroke="#cc3a22" stroke-width="8" stroke-linecap="round"/>
<path d="M400,812 C410,808 420,806 432,806 M426,810 C430,830 432,850 436,876 L431,881 M436,876 L442,879" fill="none" stroke="#c84a36" stroke-width="2.2" stroke-linecap="round"/>
<path d="M400,812 C410,808 420,806 432,806" fill="none" stroke="#f0a090" stroke-width="1" opacity="0.6"/>
</svg>
<svg class="a" style="left:0;top:-111px" width="906" height="1014" viewBox="0 0 906 1014"><circle cx="479.5" cy="198" r="5.7" fill="#fff" stroke="#151515" stroke-width="1.3"/><circle cx="601.3" cy="219.5" r="5.7" fill="#fff" stroke="#151515" stroke-width="1.3"/><circle cx="361" cy="261" r="5.7" fill="#fff" stroke="#151515" stroke-width="1.3"/><circle cx="684.6" cy="326.8" r="5.7" fill="#fff" stroke="#151515" stroke-width="1.3"/><circle cx="637.7" cy="327.7" r="5.7" fill="#fff" stroke="#151515" stroke-width="1.3"/><circle cx="287.3" cy="368.7" r="5.7" fill="#fff" stroke="#151515" stroke-width="1.3"/><circle cx="378.8" cy="362.9" r="5.7" fill="#fff" stroke="#151515" stroke-width="1.3"/><circle cx="458" cy="355" r="5.7" fill="#fff" stroke="#151515" stroke-width="1.3"/><circle cx="521" cy="334.7" r="5.7" fill="#fff" stroke="#151515" stroke-width="1.3"/><circle cx="588.5" cy="359.5" r="5.7" fill="#fff" stroke="#151515" stroke-width="1.3"/><circle cx="624.5" cy="380.7" r="5.7" fill="#fff" stroke="#151515" stroke-width="1.3"/><circle cx="492.8" cy="388" r="5.7" fill="#fff" stroke="#151515" stroke-width="1.3"/><circle cx="601.3" cy="401" r="5.7" fill="#fff" stroke="#151515" stroke-width="1.3"/><circle cx="675" cy="401.8" r="5.7" fill="#fff" stroke="#151515" stroke-width="1.3"/><circle cx="419.8" cy="437.8" r="5.7" fill="#fff" stroke="#151515" stroke-width="1.3"/><circle cx="341" cy="445.7" r="5.7" fill="#fff" stroke="#151515" stroke-width="1.3"/><circle cx="541.2" cy="444.5" r="5.7" fill="#fff" stroke="#151515" stroke-width="1.3"/><circle cx="577.3" cy="426.6" r="5.7" fill="#fff" stroke="#151515" stroke-width="1.3"/><circle cx="371.4" cy="488" r="5.7" fill="#fff" stroke="#151515" stroke-width="1.3"/><circle cx="493.6" cy="491.3" r="5.7" fill="#fff" stroke="#151515" stroke-width="1.3"/><circle cx="541.6" cy="485.9" r="5.7" fill="#fff" stroke="#151515" stroke-width="1.3"/><circle cx="621.2" cy="517" r="5.7" fill="#fff" stroke="#151515" stroke-width="1.3"/><circle cx="542" cy="517" r="5.7" fill="#fff" stroke="#151515" stroke-width="1.3"/><circle cx="684.6" cy="541.8" r="5.7" fill="#fff" stroke="#151515" stroke-width="1.3"/><circle cx="294" cy="536.4" r="5.7" fill="#fff" stroke="#151515" stroke-width="1.3"/><circle cx="455.5" cy="549.3" r="5.7" fill="#fff" stroke="#151515" stroke-width="1.3"/><circle cx="209" cy="573" r="5.7" fill="#fff" stroke="#151515" stroke-width="1.3"/><circle cx="245.5" cy="575.5" r="5.7" fill="#fff" stroke="#151515" stroke-width="1.3"/><circle cx="551.8" cy="569" r="5.7" fill="#fff" stroke="#151515" stroke-width="1.3"/><circle cx="686.3" cy="592.5" r="5.7" fill="#fff" stroke="#151515" stroke-width="1.3"/><circle cx="360" cy="586.8" r="5.7" fill="#fff" stroke="#151515" stroke-width="1.3"/><circle cx="359.2" cy="614.6" r="5.7" fill="#fff" stroke="#151515" stroke-width="1.3"/><circle cx="579" cy="603.7" r="5.7" fill="#fff" stroke="#151515" stroke-width="1.3"/><circle cx="628.2" cy="625.4" r="5.7" fill="#fff" stroke="#151515" stroke-width="1.3"/><circle cx="581.3" cy="647" r="5.7" fill="#fff" stroke="#151515" stroke-width="1.3"/><circle cx="291.5" cy="683" r="5.7" fill="#fff" stroke="#151515" stroke-width="1.3"/><circle cx="389" cy="685.3" r="5.7" fill="#fff" stroke="#151515" stroke-width="1.3"/><circle cx="462" cy="673" r="5.7" fill="#fff" stroke="#151515" stroke-width="1.3"/><circle cx="493.7" cy="681.4" r="5.7" fill="#fff" stroke="#151515" stroke-width="1.3"/><circle cx="522.3" cy="671.8" r="5.7" fill="#fff" stroke="#151515" stroke-width="1.3"/><circle cx="589.5" cy="704" r="5.7" fill="#fff" stroke="#151515" stroke-width="1.3"/><circle cx="654.2" cy="718.3" r="5.7" fill="#fff" stroke="#151515" stroke-width="1.3"/><circle cx="491.5" cy="725.6" r="5.7" fill="#fff" stroke="#151515" stroke-width="1.3"/><circle cx="443.8" cy="743.4" r="5.7" fill="#fff" stroke="#151515" stroke-width="1.3"/><circle cx="525" cy="783.8" r="5.7" fill="#fff" stroke="#151515" stroke-width="1.3"/><circle cx="395.6" cy="796" r="5.7" fill="#fff" stroke="#151515" stroke-width="1.3"/><circle cx="425" cy="817.6" r="5.7" fill="#fff" stroke="#151515" stroke-width="1.3"/><circle cx="334.9" cy="823.3" r="5.7" fill="#fff" stroke="#151515" stroke-width="1.3"/><circle cx="587.8" cy="829.3" r="5.7" fill="#fff" stroke="#151515" stroke-width="1.3"/><circle cx="656" cy="826.7" r="5.7" fill="#fff" stroke="#151515" stroke-width="1.3"/><circle cx="455" cy="910.5" r="5.7" fill="#fff" stroke="#151515" stroke-width="1.3"/></svg>
</div>
<div class="a" style="left:917px;top:5px;width:706px;height:1009px;background:#e6e6e6"></div>
<div class="a" style="left:917px;top:6px;width:1px;height:1008px;background:#1e4a70"></div>
<div class="a" style="left:918px;top:6px;width:704px;height:151px;background:#d4d4d4;border-top:1.5px solid #4a78a0;border-right:1px solid #6a8aaa;border-bottom:1px solid #5a7896;box-sizing:border-box"></div>
<div class="a" style="left:918px;top:158px;width:704px;height:623px;background:#000"></div>
<svg class="a" style="left:0;top:0" width="1627" height="1014">
<rect x="1621.5" y="158" width="1" height="623" fill="#999"/>
<path d="M917.0,478.5 L1007.4,454.0 L1092.0,450.8 L1182.8,421.6 C1185.6,415.3 1193.5,398.1 1199.6,384.0 C1205.7,369.9 1213.1,350.6 1219.3,336.8 C1225.5,323.0 1231.4,311.2 1237.0,301.3 C1242.6,291.4 1247.9,283.2 1252.8,277.6 C1257.7,272.0 1262.6,269.4 1266.6,267.8 C1270.5,266.2 1272.2,266.5 1276.5,267.8 C1280.8,269.1 1287.0,271.3 1292.3,275.6 C1297.5,279.9 1302.1,285.8 1308.0,293.4 C1313.9,301.0 1321.2,311.5 1327.8,321.0 C1334.4,330.5 1340.9,341.4 1347.5,350.6 C1354.1,359.8 1361.4,369.1 1367.2,376.2 C1373.0,383.3 1375.9,385.4 1382.1,393.1 C1388.3,400.8 1396.9,414.0 1404.3,422.6 C1411.7,431.2 1419.5,439.8 1426.4,444.7 C1433.3,449.6 1439.0,451.9 1445.6,452.1 C1452.2,452.4 1458.3,450.4 1466.2,446.2 C1474.1,442.0 1483.5,433.6 1492.8,427.0 C1502.1,420.4 1514.9,410.2 1522.3,406.4 C1529.7,402.6 1531.6,403.2 1537.0,404.2 C1542.4,405.2 1548.5,408.5 1554.7,412.3 C1560.9,416.1 1568.5,422.6 1573.9,427.0 C1579.3,431.4 1585.0,436.8 1587.2,438.8" fill="none" stroke="#0626c4" stroke-width="4.4" stroke-linejoin="round"/>
</svg>
<div class="a" style="left:1623px;top:54px;width:4px;height:960px;background:#000"></div>
<svg class="a" style="left:0;top:0" width="1627" height="1014">
<rect x="917" y="790" width="705" height="73" fill="#fdfdfd"/>
<rect x="917" y="791" width="34" height="28" fill="#fffffa"/>
<rect x="951" y="791" width="27" height="28" fill="#fff8ec"/>
<rect x="978" y="791" width="8" height="28" fill="#fffad8"/>
<rect x="986" y="791" width="30" height="28" fill="#fffbc6"/>
<rect x="1016" y="791" width="18" height="28" fill="#fffccc"/>
<rect x="1034" y="791" width="28" height="28" fill="#fdfb92"/>
<rect x="1062" y="791" width="28" height="28" fill="#fffa60"/>
<rect x="1090" y="791" width="28" height="28" fill="#ffff30"/>
<rect x="1118" y="791" width="36" height="28" fill="#ffff00"/>
<rect x="1154" y="791" width="12" height="28" fill="#ffc000"/>
<rect x="1166" y="791" width="11" height="28" fill="#ffd000"/>
<rect x="1177" y="791" width="21" height="28" fill="#ffc833"/>
<rect x="1198" y="791" width="43" height="28" fill="#ff9933"/>
<rect x="1241" y="791" width="44" height="28" fill="#ff6633"/>
<rect x="1285" y="791" width="5" height="28" fill="#ff4433"/>
<rect x="1290" y="791" width="16" height="28" fill="#ff3333"/>
<rect x="1306" y="791" width="23" height="28" fill="#ff3300"/>
<rect x="1329" y="791" width="44" height="28" fill="#ff0000"/>
<rect x="1373" y="791" width="44" height="28" fill="#cc0000"/>
<rect x="1417" y="791" width="32" height="28" fill="#990000"/>
<rect x="1449" y="791" width="21" height="28" fill="#800000"/>
<rect x="1470" y="791" width="32" height="28" fill="#660000"/>
<rect x="1502" y="791" width="43" height="28" fill="#330000"/>
<rect x="1545" y="791" width="77" height="28" fill="#000000"/>
<rect x="917" y="835" width="122" height="28" fill="#000000"/>
<rect x="1039" y="835" width="19" height="28" fill="#1a1a1a"/>
<rect x="1058" y="835" width="12" height="28" fill="#241a24"/>
<rect x="1070" y="835" width="20" height="28" fill="#330033"/>
<rect x="1090" y="835" width="22" height="28" fill="#330066"/>
<rect x="1112" y="835" width="20" height="28" fill="#663366"/>
<rect x="1132" y="835" width="146" height="28" fill="#663399"/>
<rect x="1278" y="835" width="4" height="28" fill="#6633aa"/>
<rect x="1282" y="835" width="15" height="28" fill="#3333cc"/>
<rect x="1297" y="835" width="31" height="28" fill="#3300cc"/>
<rect x="1328" y="835" width="36" height="28" fill="#0000ff"/>
<rect x="1364" y="835" width="19" height="28" fill="#0033ff"/>
<rect x="1383" y="835" width="10" height="28" fill="#3322ff"/>
<rect x="1393" y="835" width="24" height="28" fill="#3366ff"/>
<rect x="1417" y="835" width="11" height="28" fill="#3399ff"/>
<rect x="1428" y="835" width="21" height="28" fill="#6699ff"/>
<rect x="1449" y="835" width="26" height="28" fill="#66ccff"/>
<rect x="1475" y="835" width="44" height="28" fill="#99ccff"/>
<rect x="1519" y="835" width="26" height="28" fill="#cce6ff"/>
<rect x="1545" y="835" width="20" height="28" fill="#ccffff"/>
<rect x="1565" y="835" width="57" height="28" fill="#f5f5f5"/>
<rect x="916" y="791" width="2" height="28" fill="#1a7a1a" fill-opacity="0.85"/>
<rect x="916" y="835" width="2" height="28" fill="#1a7a1a" fill-opacity="0.85"/>
<rect x="933" y="791" width="2" height="28" fill="#1a7a1a" fill-opacity="0.85"/>
<rect x="933" y="835" width="2" height="28" fill="#1a7a1a" fill-opacity="0.85"/>
<rect x="950.5" y="791" width="2" height="28" fill="#1a7a1a" fill-opacity="0.85"/>
<rect x="950.5" y="835" width="2" height="28" fill="#1a7a1a" fill-opacity="0.85"/>
<rect x="977.5" y="791" width="2" height="28" fill="#1a7a1a" fill-opacity="0.85"/>
<rect x="977.5" y="835" width="2" height="28" fill="#1a7a1a" fill-opacity="0.85"/>
<rect x="986" y="791" width="2" height="28" fill="#1a7a1a" fill-opacity="0.85"/>
<rect x="986" y="835" width="2" height="28" fill="#1a7a1a" fill-opacity="0.85"/>
<rect x="1015.5" y="791" width="2" height="28" fill="#1a7a1a" fill-opacity="0.85"/>
<rect x="1015.5" y="835" width="2" height="28" fill="#1a7a1a" fill-opacity="0.85"/>
<rect x="1030" y="791" width="2" height="28" fill="#1a7a1a" fill-opacity="0.85"/>
<rect x="1030" y="835" width="2" height="28" fill="#1a7a1a" fill-opacity="0.85"/>
<rect x="1049.5" y="791" width="2" height="28" fill="#1a7a1a" fill-opacity="0.85"/>
<rect x="1049.5" y="835" width="2" height="28" fill="#1a7a1a" fill-opacity="0.85"/>
<rect x="1070.5" y="791" width="2" height="28" fill="#1a7a1a" fill-opacity="0.85"/>
<rect x="1070.5" y="835" width="2" height="28" fill="#1a7a1a" fill-opacity="0.85"/>
<rect x="1097.5" y="791" width="2" height="28" fill="#1a7a1a" fill-opacity="0.85"/>
<rect x="1097.5" y="835" width="2" height="28" fill="#1a7a1a" fill-opacity="0.85"/>
<rect x="1119" y="791" width="2" height="28" fill="#1a7a1a" fill-opacity="0.85"/>
<rect x="1119" y="835" width="2" height="28" fill="#1a7a1a" fill-opacity="0.85"/>
<rect x="1134" y="791" width="2" height="28" fill="#1a7a1a" fill-opacity="0.85"/>
<rect x="1134" y="835" width="2" height="28" fill="#1a7a1a" fill-opacity="0.85"/>
<rect x="1164" y="791" width="2" height="28" fill="#1a7a1a" fill-opacity="0.85"/>
<rect x="1164" y="835" width="2" height="28" fill="#1a7a1a" fill-opacity="0.85"/>
<rect x="1188" y="791" width="2" height="28" fill="#1a7a1a" fill-opacity="0.85"/>
<rect x="1188" y="835" width="2" height="28" fill="#1a7a1a" fill-opacity="0.85"/>
<rect x="1227.5" y="791" width="2" height="28" fill="#1a7a1a" fill-opacity="0.85"/>
<rect x="1227.5" y="835" width="2" height="28" fill="#1a7a1a" fill-opacity="0.85"/>
<rect x="1252" y="791" width="2" height="28" fill="#1a7a1a" fill-opacity="0.85"/>
<rect x="1252" y="835" width="2" height="28" fill="#1a7a1a" fill-opacity="0.85"/>
<rect x="1264" y="791" width="2" height="28" fill="#1a7a1a" fill-opacity="0.85"/>
<rect x="1264" y="835" width="2" height="28" fill="#1a7a1a" fill-opacity="0.85"/>
<rect x="1276" y="791" width="2" height="28" fill="#1a7a1a" fill-opacity="0.85"/>
<rect x="1276" y="835" width="2" height="28" fill="#1a7a1a" fill-opacity="0.85"/>
<rect x="1288" y="791" width="2" height="28" fill="#1a7a1a" fill-opacity="0.85"/>
<rect x="1288" y="835" width="2" height="28" fill="#1a7a1a" fill-opacity="0.85"/>
<rect x="1314" y="791" width="2" height="28" fill="#1a7a1a" fill-opacity="0.85"/>
<rect x="1314" y="835" width="2" height="28" fill="#1a7a1a" fill-opacity="0.85"/>
<rect x="1358" y="791" width="2" height="28" fill="#1a7a1a" fill-opacity="0.85"/>
<rect x="1358" y="835" width="2" height="28" fill="#1a7a1a" fill-opacity="0.85"/>
<rect x="1372" y="791" width="2" height="28" fill="#1a7a1a" fill-opacity="0.85"/>
<rect x="1372" y="835" width="2" height="28" fill="#1a7a1a" fill-opacity="0.85"/>
<rect x="1382" y="791" width="2" height="28" fill="#1a7a1a" fill-opacity="0.85"/>
<rect x="1382" y="835" width="2" height="28" fill="#1a7a1a" fill-opacity="0.85"/>
<rect x="1396" y="791" width="2" height="28" fill="#1a7a1a" fill-opacity="0.85"/>
<rect x="1396" y="835" width="2" height="28" fill="#1a7a1a" fill-opacity="0.85"/>
<rect x="1417" y="791" width="2" height="28" fill="#1a7a1a" fill-opacity="0.85"/>
<rect x="1417" y="835" width="2" height="28" fill="#1a7a1a" fill-opacity="0.85"/>
<rect x="1448.5" y="791" width="2" height="28" fill="#1a7a1a" fill-opacity="0.85"/>
<rect x="1448.5" y="835" width="2" height="28" fill="#1a7a1a" fill-opacity="0.85"/>
<rect x="1488.5" y="791" width="2" height="28" fill="#1a7a1a" fill-opacity="0.85"/>
<rect x="1488.5" y="835" width="2" height="28" fill="#1a7a1a" fill-opacity="0.85"/>
<rect x="1501" y="791" width="2" height="28" fill="#1a7a1a" fill-opacity="0.85"/>
<rect x="1501" y="835" width="2" height="28" fill="#1a7a1a" fill-opacity="0.85"/>
<rect x="1518" y="791" width="2" height="28" fill="#1a7a1a" fill-opacity="0.85"/>
<rect x="1518" y="835" width="2" height="28" fill="#1a7a1a" fill-opacity="0.85"/>
<rect x="1544" y="791" width="2" height="28" fill="#1a7a1a" fill-opacity="0.85"/>
<rect x="1544" y="835" width="2" height="28" fill="#1a7a1a" fill-opacity="0.85"/>
<rect x="1571.5" y="791" width="2" height="28" fill="#1a7a1a" fill-opacity="0.85"/>
<rect x="1571.5" y="835" width="2" height="28" fill="#1a7a1a" fill-opacity="0.85"/>
<rect x="1616" y="791" width="2" height="28" fill="#1a7a1a" fill-opacity="0.85"/>
<rect x="1616" y="835" width="2" height="28" fill="#1a7a1a" fill-opacity="0.85"/>
<rect x="1620" y="791" width="2" height="28" fill="#1a7a1a" fill-opacity="0.85"/>
<rect x="1620" y="835" width="2" height="28" fill="#1a7a1a" fill-opacity="0.85"/>
<rect x="1142.5" y="791" width="2" height="29" fill="#300050"/>
<rect x="1144.5" y="791" width="2" height="28" fill="#f090f0"/>
<path d="M1142.5,819 L1142.5,822 L1146,822" stroke="#222" stroke-width="1.2" fill="none"/>
<rect x="1144" y="835" width="2" height="28" fill="#1a7a1a"/>
<rect x="1230" y="835" width="3.5" height="28" fill="#a6d27e"/>
<path d="M1228.5,835 L1231.8,831.5 L1235,835 Z" fill="#111"/>
</svg>
<div class="a" style="left:917.0px;top:820px;font-size:12.5px;line-height:14px;color:#222">1</div>
<div class="a" style="left:1025.5px;top:820px;font-size:12.5px;line-height:14px;color:#222">2</div>
<div class="a" style="left:1140.5px;top:820px;font-size:12.5px;line-height:14px;color:#222">3</div>
<div class="a" style="left:1260.5px;top:820px;font-size:12.5px;line-height:14px;color:#222">4</div>
<div class="a" style="left:1378.5px;top:820px;font-size:12.5px;line-height:14px;color:#222">5</div>
<div class="a" style="left:1496.5px;top:820px;font-size:12.5px;line-height:14px;color:#222">6</div>
<div class="a" style="left:1610.5px;top:820px;font-size:12.5px;line-height:14px;color:#222">0</div>
<div class="a" style="left:918px;top:875px;width:704px;height:139px;background:#d4d4d4;border-top:1px solid #2a5a86;border-right:1px solid #6a8aaa;box-sizing:border-box"></div>
<div class="a" style="left:925px;top:887.5px;width:97.5px;height:110px;border-radius:6px;background:linear-gradient(#f8f8f9,#eceef0 40%,#d5d7db);box-shadow:3px 5px 6px rgba(0,0,0,0.6), inset 2px -2px 0 #fff, inset -1px 1px 0 #8e8e8e;"></div>
<div class="a" style="left:1040px;top:887.5px;width:97.5px;height:110px;border-radius:6px;background:linear-gradient(#f8f8f9,#eceef0 40%,#d5d7db);box-shadow:3px 5px 6px rgba(0,0,0,0.6), inset 2px -2px 0 #fff, inset -1px 1px 0 #8e8e8e;"></div>
<div class="a" style="left:1157.5px;top:887.5px;width:97.5px;height:110px;border-radius:6px;background:linear-gradient(#f8f8f9,#eceef0 40%,#d5d7db);box-shadow:3px 5px 6px rgba(0,0,0,0.6), inset 2px -2px 0 #fff, inset -1px 1px 0 #8e8e8e;"></div>
<div class="a" style="left:1273px;top:887.5px;width:97.5px;height:110px;border-radius:6px;background:linear-gradient(#f8f8f9,#eceef0 40%,#d5d7db);box-shadow:3px 5px 6px rgba(0,0,0,0.6), inset 2px -2px 0 #fff, inset -1px 1px 0 #8e8e8e;"></div>
<div class="a" style="left:1390px;top:887.5px;width:97.5px;height:110px;border-radius:6px;background:linear-gradient(#f8f8f9,#eceef0 40%,#d5d7db);box-shadow:3px 5px 6px rgba(0,0,0,0.6), inset 2px -2px 0 #fff, inset -1px 1px 0 #8e8e8e;"></div>
<div class="a" style="left:1507.5px;top:887.5px;width:97.5px;height:110px;border-radius:6px;background:linear-gradient(#f8f8f9,#eceef0 40%,#d5d7db);box-shadow:3px 5px 6px rgba(0,0,0,0.6), inset 2px -2px 0 #fff, inset -1px 1px 0 #8e8e8e;"></div>
<svg class="a" style="left:0;top:0" width="1627" height="1014">
<polygon points="973.8,902.8 1009.6,923 1009.6,962 973.8,981 938.6,962 938.6,922.5" fill="#fdfbc6" stroke="#111" stroke-width="3.2" stroke-linejoin="round"/>
<polygon points="1069.8,908.6 1108.2,908.6 1128,941.5 1108.2,974.4 1069.8,974.4 1050,941.5" fill="#ecec00" stroke="#3a0a3a" stroke-width="2.2"/>
<polygon points="1206,908.6 1245.3,975 1167.7,975" fill="#ff6a1c" stroke="#2a1050" stroke-width="2"/>
<polygon points="1280.8,910.5 1363.5,910.5 1321.3,978" fill="#ff1c22" stroke="#2a20d8" stroke-width="2.6"/>
<line x1="1280.8" y1="910.5" x2="1363.5" y2="910.5" stroke="#201060" stroke-width="2.6"/>
<polygon points="1440.7,903 1480,942 1440.7,981.3 1400,942" fill="#a83a20" stroke="#40dada" stroke-width="2.6"/>
<polyline points="1400,942 1440.7,903 1480,942" fill="none" stroke="#1a5a58" stroke-width="2.6"/>
<rect x="1521" y="905.5" width="74.5" height="72.5" fill="#4a4a4a"/>
<rect x="1523.5" y="908.5" width="69.5" height="67" fill="#1b1b1b"/>
</svg>
<svg class="a" style="left:0;top:0" width="1627" height="1014"><path d="M968.5,933 L976.5,927.8 L981,927.8 L981,954.6 L986.5,954.6 L986.5,959 L966,959 L966,954.6 L975,954.6 L975,934.5 L968.5,938 Z" fill="#111"/></svg>
<div class="a" style="left:1069.0px;top:920.3px;width:42.3px;text-align:center;font-weight:bold;font-size:38.7px;line-height:43.2px;color:#5a0a50">2</div>
<div class="a" style="left:1188.4px;top:924.3px;width:39.2px;text-align:center;font-weight:bold;font-size:41.9px;line-height:46.8px;color:#8a2ae0">3</div>
<div class="a" style="left:1301.3px;top:912.5px;width:42.3px;text-align:center;font-weight:bold;font-size:39.7px;line-height:44.3px;color:#2a3ae8">4</div>
<div class="a" style="left:1419.3px;top:920.4px;width:42.1px;text-align:center;font-weight:bold;font-size:42.5px;line-height:47.4px;color:#22e6e6">5</div>
<div class="a" style="left:1537.8px;top:916.8px;width:42.7px;text-align:center;font-weight:bold;font-size:45.5px;line-height:50.9px;color:#ffffff">6</div>
<div class="a" style="left:1451px;top:39.5px;width:73px;height:80.5px;border-radius:6px;background:linear-gradient(#f8f8f9,#eceef0 40%,#d5d7db);box-shadow:3px 5px 6px rgba(0,0,0,0.6), inset 2px -2px 0 #fff, inset -1px 1px 0 #8e8e8e;"></div>
<div class="a" style="left:1540.5px;top:40px;width:72px;height:80px;border-radius:6px;background:linear-gradient(#f8f8f9,#eceef0 40%,#d5d7db);box-shadow:3px 5px 6px rgba(0,0,0,0.6), inset 2px -2px 0 #fff, inset -1px 1px 0 #8e8e8e;"></div>
<svg class="a" style="left:0;top:0" width="1627" height="1014"><defs><linearGradient id="og" x1="0" y1="0" x2="0" y2="1"><stop offset="0" stop-color="#ffd070"/><stop offset="0.5" stop-color="#ff9a00"/><stop offset="1" stop-color="#d86a00"/></linearGradient></defs><ellipse cx="1489" cy="77.7" rx="19.5" ry="20" fill="#eef3fc" stroke="#4f86e0" stroke-width="3"/><path d="M1465.5,74 L1470,84 L1474,74 Z M1512.5,81 L1508,71 L1504,81 Z" fill="#3a70d0"/><ellipse cx="1489" cy="77.7" rx="16" ry="16.5" fill="none" stroke="#b0cbf6" stroke-width="1.5"/><rect x="1478" y="67.5" width="9" height="20" rx="3" fill="url(#og)"/><rect x="1490" y="67.5" width="9" height="20" rx="3" fill="url(#og)"/><rect x="1497" y="68" width="2.5" height="19" fill="#3a2a10"/><circle cx="1576.8" cy="78" r="17" fill="none" stroke="#e0101a" stroke-width="5"/><rect x="1574.2" y="70" width="5.2" height="14" fill="#e0101a"/></svg>
<div class="a" style="left:522px;top:5px;width:574px;height:35px;background:#f0f0f0;border-left:1px solid #cfd2d4;border-bottom:1px solid #d8dadc;box-sizing:border-box"></div>
<div class="a" style="left:1047px;top:40px;width:36px;height:18px;background:#f0f0f0"></div>
<svg class="a" style="left:0;top:0" width="1627" height="1014"><path d="M532.5,15.5 L547.5,30.5 M547.5,15.5 L532.5,30.5" stroke="#505050" stroke-width="2.3" stroke-linecap="round"/><circle cx="575" cy="22.8" r="9.8" fill="none" stroke="#dcdcdc" stroke-width="4.2"/><path d="M565.2,22.8 A9.8,9.8 0 1 0 577.5,13.3" fill="none" stroke="#6f9c88" stroke-width="4.2"/><path d="M571.5,21.3 L579,21.3 M572,24.2 L578.5,24.2" stroke="#777" stroke-width="1"/><g transform="translate(592.00,15.80) scale(0.970)" stroke="#1c1c1c" stroke-width="1.39" fill="none" stroke-linecap="square"><line x1="7" y1="0.5" x2="9" y2="2"/><line x1="2" y1="3.2" x2="14" y2="3.2"/><line x1="8" y1="3.2" x2="8" y2="14"/><line x1="3" y1="8.5" x2="13" y2="8.5"/><line x1="1" y1="14.2" x2="15" y2="14.2"/></g><g transform="translate(607.80,15.80) scale(0.970)" stroke="#1c1c1c" stroke-width="1.39" fill="none" stroke-linecap="square"><line x1="1" y1="1" x2="15" y2="1"/><line x1="8.5" y1="1" x2="7.5" y2="3"/><path d="M3.5,3.5 L12.5,3.5 L12.5,11.5 M3.5,3.5 L3.5,11.5"/><line x1="8" y1="5.5" x2="8" y2="10"/><line x1="8" y1="10" x2="3" y2="15"/><line x1="9" y1="11.5" x2="14" y2="15"/></g><path d="M647,13 L655,13 L651,20 L656,20 L642,32.5 L646.5,23 L640.5,23 Z" fill="#f2c466"/><g transform="translate(663.50,15.80) scale(0.970)" stroke="#1c1c1c" stroke-width="1.39" fill="none" stroke-linecap="square"><line x1="1" y1="2.5" x2="7" y2="2.5"/><line x1="0.5" y1="6" x2="8" y2="6"/><path d="M4.5,6 L1.5,13 L8,12"/><line x1="6" y1="9.5" x2="8" y2="13"/><path d="M8.5,5 L15,5 L15,14.5 L13,14"/><path d="M12,1 L11.5,9 L9,15"/></g><g transform="translate(679.50,15.80) scale(0.970)" stroke="#1c1c1c" stroke-width="1.39" fill="none" stroke-linecap="square"><line x1="4" y1="0.5" x2="1" y2="7"/><line x1="3" y1="5" x2="3" y2="15.5"/><line x1="8" y1="1" x2="6" y2="6"/><line x1="7.5" y1="4" x2="15" y2="4"/><line x1="9.5" y1="4" x2="9.5" y2="15.5"/><line x1="9.5" y1="8.2" x2="14.5" y2="8.2"/><line x1="9.5" y1="12" x2="14.5" y2="12"/></g><path d="M700.3,21.0 L707.7,21.0 L704.0,25.2 Z" fill="#6e6e6e"/><rect x="721.8" y="13.8" width="13" height="9.8" rx="1.5" fill="#fdfdfd" stroke="#4a7ab4" stroke-width="1.8"/><path d="M723,33 C727,30 730,28 733,25.5 C735,24 737,25 736.5,27.5 C735,31 729,33.5 723,33 Z" fill="#4a80c0"/><path d="M725,27 L730,26.5 M724,29 L727,28.5" stroke="#4a80c0" stroke-width="1"/><path d="M735,24.5 L740.5,18 L741,22 L737.5,26 Z" fill="#5a5a5a"/><g transform="translate(748.00,15.60) scale(0.970)" stroke="#1c1c1c" stroke-width="1.39" fill="none" stroke-linecap="square"><line x1="2" y1="3" x2="14" y2="3"/><line x1="8" y1="0" x2="8" y2="7"/><line x1="7.5" y1="3.5" x2="2" y2="8"/><line x1="8.5" y1="3.5" x2="14" y2="8"/><path d="M4,8 L12,8 L12,13 L4,13 Z"/><line x1="4" y1="10.5" x2="12" y2="10.5"/><line x1="1" y1="15" x2="15" y2="15"/></g><g transform="translate(763.90,15.60) scale(0.970)" stroke="#1c1c1c" stroke-width="1.39" fill="none" stroke-linecap="square"><line x1="12.5" y1="0.5" x2="3" y2="2"/><line x1="2" y1="4" x2="14" y2="4"/><line x1="3" y1="6.5" x2="13" y2="6.5"/><line x1="1" y1="9" x2="15" y2="9"/><line x1="7" y1="2" x2="2" y2="15"/><path d="M6,10.5 L13,10.5 L13,15.5 L6,15.5 Z"/><line x1="6" y1="12.2" x2="13" y2="12.2"/><line x1="6" y1="13.9" x2="13" y2="13.9"/></g><path d="M784.8,21.0 L792.2,21.0 L788.5,25.2 Z" fill="#6e6e6e"/><path d="M806.5,16 C802.5,19.5 804,27.5 812,32 C815.5,33.5 819.5,33.5 821.5,31 L818.5,28 C816.5,29.5 814.5,29 812.5,27.5 C808.5,24 808.5,21 809.5,20 Z" fill="#4f86c2"/><path d="M816.5,13.5 L825.5,13.5 Q826.5,13.5 826.5,14.5 L826.5,20 Q826.5,21 825.5,21 L823,21 L821.5,23 L821.5,21 L816.5,21 Q815.5,21 815.5,20 L815.5,14.5 Q815.5,13.5 816.5,13.5 Z" fill="#fbfbfb" stroke="#858585" stroke-width="1"/><path d="M812,17.5 L818,17.5 Q819,17.5 819,18.5 L819,23.5 Q819,24.5 818,24.5 L815,24.5 L812.5,27 L812.5,24.5 Q811,24.5 811,23.5 L811,18.5 Q811,17.5 812,17.5 Z" fill="#fbfbfb" stroke="#858585" stroke-width="1"/><g transform="translate(832.00,15.60) scale(0.970)" stroke="#1c1c1c" stroke-width="1.39" fill="none" stroke-linecap="square"><line x1="1" y1="1.5" x2="2.5" y2="3.5"/><path d="M0.5,7 L3,7 L3,12.5 L1,14.5"/><path d="M1.5,13.5 Q4,15 15,15"/><path d="M6,1 L13,1 L10,3"/><path d="M6,4 L14,4 L14,12.5 M6,4 L6,12.5"/><line x1="10" y1="4" x2="10" y2="12.5"/><line x1="6" y1="7" x2="14" y2="7"/><line x1="6" y1="9.7" x2="14" y2="9.7"/></g><g transform="translate(847.80,15.60) scale(0.970)" stroke="#1c1c1c" stroke-width="1.39" fill="none" stroke-linecap="square"><line x1="4" y1="0.5" x2="1" y2="7"/><line x1="3" y1="5" x2="3" y2="15.5"/><line x1="9.5" y1="0" x2="10.5" y2="2"/><line x1="6" y1="3" x2="15" y2="3"/><line x1="7" y1="5.7" x2="14" y2="5.7"/><line x1="7" y1="8.2" x2="14" y2="8.2"/><path d="M7,10.5 L14,10.5 L14,15.5 L7,15.5 Z"/></g><path d="M868.8,21.0 L876.2,21.0 L872.5,25.2 Z" fill="#6e6e6e"/><path d="M888.5,13.5 L896,13.5 L900,17.5 L900,21 M896,29.5 L888.5,29.5 Z" fill="#fafafa" stroke="#555" stroke-width="1.1"/><path d="M888.5,13.5 L888.5,29.5" stroke="#555" stroke-width="1.1"/><path d="M896,13.5 L896,17.5 L900,17.5" fill="none" stroke="#555" stroke-width="1"/><path d="M897,23 L900.5,23 C900,20 904,20 903.5,23 L907,23 L907,26 C910,25.5 910,29.5 907,29 L907,32.5 L903.5,32.5 C904,30 900,30 900.5,32.5 L897,32.5 Z" fill="#6e9e8c"/><g transform="translate(916.00,15.60) scale(0.970)" stroke="#1c1c1c" stroke-width="1.39" fill="none" stroke-linecap="square"><line x1="8" y1="0" x2="8.5" y2="2.2"/><line x1="1" y1="3.5" x2="15" y2="3.5"/><line x1="4.5" y1="4" x2="14.5" y2="15.5"/><line x1="11.5" y1="4" x2="1" y2="15.5"/></g><g transform="translate(932.00,15.60) scale(0.970)" stroke="#1c1c1c" stroke-width="1.39" fill="none" stroke-linecap="square"><line x1="4" y1="0.5" x2="1" y2="7"/><line x1="3" y1="5" x2="3" y2="15.5"/><line x1="8" y1="1" x2="6" y2="5.5"/><line x1="7" y1="4.5" x2="14.5" y2="4.5"/><line x1="5" y1="9.2" x2="15.5" y2="9.2"/><line x1="10.5" y1="1" x2="10.5" y2="15.5"/></g><g transform="translate(948.00,15.60) scale(0.970)" stroke="#1c1c1c" stroke-width="1.39" fill="none" stroke-linecap="square"><path d="M4.5,0.5 L4.5,8 L14,8 L13,14 L10.5,13.5"/><line x1="4.5" y1="2.5" x2="14" y2="2.5"/><line x1="1" y1="11" x2="15.5" y2="11"/></g><g transform="translate(964.00,15.60) scale(0.970)" stroke="#1c1c1c" stroke-width="1.39" fill="none" stroke-linecap="square"><line x1="1" y1="3" x2="15" y2="3"/><line x1="4.5" y1="0" x2="4.5" y2="11"/><line x1="11.5" y1="0" x2="11.5" y2="11"/><line x1="4.5" y1="5.8" x2="11.5" y2="5.8"/><line x1="4.5" y1="8.4" x2="11.5" y2="8.4"/><line x1="0.5" y1="11" x2="15.5" y2="11"/><line x1="5" y1="12.5" x2="2" y2="15.5"/><line x1="11" y1="12.5" x2="14.5" y2="15.5"/></g><g transform="translate(980.00,15.60) scale(0.970)" stroke="#1c1c1c" stroke-width="1.39" fill="none" stroke-linecap="square"><line x1="4" y1="0.5" x2="1" y2="7"/><line x1="3" y1="5" x2="3" y2="15.5"/><path d="M6,7.5 L15,4.5 L14.5,9"/><line x1="9.5" y1="2" x2="9.5" y2="11"/><path d="M12.5,1 L12.5,10"/><path d="M6.5,4.5 L6.5,14 L15.5,14 L15.5,12"/></g><path d="M1000.8,21.0 L1008.2,21.0 L1004.5,25.2 Z" fill="#6e6e6e"/><path d="M1021,16 L1028,16 L1028,27 L1031,27 L1025,33.5 L1025,29.5 L1019,29.5 L1019,18 Z" fill="#4a80c0"/><path d="M1025,13.2 L1043,13.2 L1043,27 L1038,27 L1037.5,30 L1034,27 L1024,27 Z" fill="#74a896" /><path d="M1047.8,21.0 L1055.2,21.0 L1051.5,25.2 Z" fill="#6e6e6e"/><circle cx="1079.2" cy="22.4" r="8.9" fill="#f6d800"/><rect x="1075.5" y="17.5" width="1.6" height="3.5" fill="#333"/><rect x="1081.2" y="17.5" width="1.6" height="3.5" fill="#333"/><path d="M1073.2,24.3 Q1079.2,30.5 1085.2,24.3 Z" fill="#fff" stroke="#333" stroke-width="1.2"/><rect x="1037" y="42.5" width="2.2" height="2.2" fill="#fff"/><rect x="1037" y="46.5" width="2.2" height="2.2" fill="#fff"/><rect x="1037" y="50.5" width="2.2" height="2.2" fill="#fff"/><rect x="1037" y="54.5" width="2.2" height="2.2" fill="#fff"/><rect x="1041" y="42.5" width="2.2" height="2.2" fill="#fff"/><rect x="1041" y="46.5" width="2.2" height="2.2" fill="#fff"/><rect x="1041" y="50.5" width="2.2" height="2.2" fill="#fff"/><rect x="1041" y="54.5" width="2.2" height="2.2" fill="#fff"/><rect x="1045" y="42.5" width="2.2" height="2.2" fill="#fff"/><rect x="1045" y="46.5" width="2.2" height="2.2" fill="#fff"/><rect x="1045" y="50.5" width="2.2" height="2.2" fill="#fff"/><rect x="1045" y="54.5" width="2.2" height="2.2" fill="#fff"/><path d="M1051.5,44.5 L1054.5,44.5 M1051.5,44.5 L1051.5,47.5 M1051.5,44.5 L1054.5,47.5 M1060.5,44.5 L1057.5,44.5 M1060.5,44.5 L1060.5,47.5 M1060.5,44.5 L1057.5,47.5 M1051.5,53.5 L1054.5,53.5 M1051.5,53.5 L1051.5,50.5 M1051.5,53.5 L1054.5,50.5 M1060.5,53.5 L1057.5,53.5 M1060.5,53.5 L1060.5,50.5 M1060.5,53.5 L1057.5,50.5" stroke="#6a6a6a" stroke-width="1.1" fill="none"/><path d="M1068,52 L1074,46 L1080,52" stroke="#6a6a6a" stroke-width="2.4" fill="none" stroke-linecap="round"/></svg>
<div class="a" style="left:1623px;top:5px;width:4px;height:49px;background:#f4f6f8"></div>
<div class="a" style="left:1623px;top:23px;width:4px;height:13px;background:#111"></div>
<div class="a" style="left:1623px;top:36.5px;width:4px;height:1.5px;background:#e8b040"></div>
<div class="a" style="left:1569px;top:991.5px;width:58px;height:23px;background:#fbfbfb"></div>
<div class="a" style="left:1610px;top:991.5px;width:1px;height:23px;background:#f0d8d8"></div>
<div class="a" style="left:1613px;top:991.5px;width:1px;height:23px;background:#f0d8d8"></div>
<svg class="a" style="left:0;top:0" width="1627" height="1014">
<path d="M1574,997 L1598,991 L1606,1014 L1579,1014 Z" fill="#f2642a"/>
<path d="M1597,998.5 C1590,997.5 1583,999 1583,1003.5 C1583,1007 1592,1006 1594,1009 C1595,1012 1590,1013 1585,1013" fill="none" stroke="#fff" stroke-width="3.2" stroke-linecap="round"/>
<rect x="1622.5" y="1002" width="6" height="6" fill="none" stroke="#1060b0" stroke-width="1.8"/>
</svg>
</body></html>
